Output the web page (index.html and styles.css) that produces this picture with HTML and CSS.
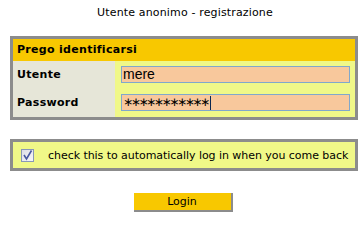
FILE: index.html
```html
<!DOCTYPE html>
<html>
<head>
<meta charset="utf-8">
<link rel="stylesheet" href="styles.css">
</head>
<body>
<div class="page">
  <div class="title">Utente anonimo - registrazione</div>
  <div class="box">
    <div class="head">Prego identificarsi</div>
    <div class="row">
      <div class="label">Utente</div>
      <div class="value"><div class="input">mere</div></div>
    </div>
    <div class="row">
      <div class="label">Password</div>
      <div class="value"><div class="input pw"><span class="stars">∗∗∗∗∗∗∗∗∗∗∗</span><span class="caret"></span></div></div>
    </div>
  </div>
  <div class="box remember">
    <svg class="check" width="13" height="13" viewBox="0 0 13 13">
      <defs>
        <linearGradient id="g" x1="0" y1="0" x2="1" y2="1">
          <stop offset="0" stop-color="#dcdce4"/>
          <stop offset="1" stop-color="#f8f8fa"/>
        </linearGradient>
      </defs>
      <rect x="0.5" y="0.5" width="12" height="12" fill="url(#g)" stroke="#8898b8"/>
      <path d="M3 6 L5.5 10 L10.5 1.5" fill="none" stroke="#4858a0" stroke-width="1.6"/>
    </svg>
    <span class="rtext">check this to automatically log in when you come back</span>
  </div>
  <div class="actions">
    <div class="btn">Login</div>
  </div>
</div>
</body>
</html>
```
FILE: styles.css
```css
html, body { margin: 0; padding: 0; background: #fff; }
body { font-family: "DejaVu Sans", Verdana, sans-serif; font-size: 11px; color: #000; }
.page { width: 348px; margin-left: 10px; padding-top: 6px; }
.title { text-align: center; height: 14px; line-height: 14px; margin-bottom: 16px; padding-left: 2px; letter-spacing: 0.15px; }
.box { border: 3px solid #8c8c8c; background: #f0f888; }
.head { background: #f8c800; height: 22px; line-height: 22px; font-weight: bold; padding-left: 4px; letter-spacing: 0.3px; }
.row { display: flex; height: 28px; }
.label { width: 98px; background: #e6e6d8; font-weight: bold; padding-left: 4px; line-height: 28px; letter-spacing: 0.3px; }
.value { flex: 1; padding: 5px 5px 0 6px; }
.input { height: 15px; border: 1px solid #80a8cc; background: #f8c89c; font-family: "Liberation Sans", Arial, sans-serif; font-size: 14px; line-height: 15px; padding-left: 1px; display: flex; align-items: center; white-space: nowrap; overflow: hidden; }
.stars { font-family: "DejaVu Sans", sans-serif; font-size: 12px; letter-spacing: -2.35px; }
.caret { display: inline-block; width: 1px; height: 14px; background: #0a2850; margin-left: 2px; }
.remember { margin-top: 19px; height: 26px; display: flex; align-items: center; padding-left: 8px; }
.check { display: block; margin-top: 1px; flex: none; }
.rtext { margin-left: 14px; white-space: nowrap; letter-spacing: -0.05px; }
.actions { display: flex; justify-content: center; margin-top: 22px; padding-right: 2px; }
.btn { width: 97px; height: 17px; line-height: 17px; text-align: center; background: #f8c800; border-right: 2px solid #8c8c8c; border-bottom: 2px solid #8c8c8c; }
```
